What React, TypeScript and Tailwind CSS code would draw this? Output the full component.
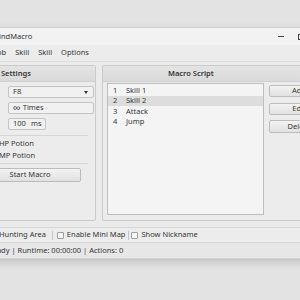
import React from 'react';

const font = { fontFamily: '"Noto Sans", "Open Sans", sans-serif' };

const macroSteps = ['Skill 1', 'Skill 2', 'Attack', 'Jump'];

const Field: React.FC<{ className?: string; children: React.ReactNode }> = ({ className = '', children }) => (
  <div
    className={`h-[12px] flex items-center px-[4px] border border-[#c4c4c4] rounded-[2px] bg-[#f1f1f1] ${className}`}
  >
    {children}
  </div>
);

const Radio: React.FC<{ label: string }> = ({ label }) => (
  <div className="h-[12px] flex items-center gap-[2px]">
    <span className="w-[8px] h-[8px] rounded-full border border-[#9a9a9a] bg-[#f6f6f6]" />
    <span>{label}</span>
  </div>
);

const Check: React.FC<{ label: string }> = ({ label }) => (
  <div className="flex items-center gap-[3px]">
    <span className="w-[7px] h-[7px] border border-[#a0a0a0] rounded-[1px] bg-[#f6f6f6]" />
    <span>{label}</span>
  </div>
);

const SideButton: React.FC<{ label: string; className?: string }> = ({ label, className = '' }) => (
  <div
    className={`w-[60px] flex items-center justify-center border border-[#bdbdbd] rounded-[2px] bg-gradient-to-b from-[#f3f3f3] to-[#e1e1e1] ${className}`}
  >
    {label}
  </div>
);

export default function App() {
  return (
    <div
      className="w-[300px] h-[300px] overflow-hidden bg-[#e3e3e3] pt-[27px] text-[7.5px] leading-none text-[#363636]"
      style={font}
    >
      <div className="ml-[-40px] w-[380px] bg-[#ebebeb] border border-[#d0d0d0] shadow-[0_3px_8px_rgba(0,0,0,0.16)]">
        {/* title bar */}
        <div className="h-[17px] flex items-center pl-[31px] bg-[#f2f2f2]">
          <span>WindMacro</span>
          <div className="ml-auto mr-[8px] flex">
            <div className="w-[20px] h-[17px] flex items-center justify-center">
              <span className="w-[6px] h-px bg-[#444]" />
            </div>
            <div className="w-[20px] h-[17px] flex items-center justify-center">
              <span className="w-[6px] h-[6px] border border-[#444]" />
            </div>
            <div className="w-[20px] h-[17px] flex items-center justify-center text-[9px]">×</div>
          </div>
        </div>

        {/* menu bar */}
        <div className="h-[17px] flex items-center gap-[9px] pl-[34px] bg-[#ececec] border-b border-[#dedede]">
          <span>Job</span>
          <span>Skill</span>
          <span>Skill</span>
          <span>Options</span>
        </div>

        {/* panels */}
        <div className="flex gap-[6px] pl-[14px] pr-[4px] pt-[3px] pb-[6px]">
          {/* settings */}
          <div className="w-[123px] border border-[#cbcbcb] rounded-[2px] bg-[#ececec]">
            <div className="h-[16px] flex items-center pl-[25px] bg-gradient-to-b from-[#e4e4e4] to-[#dadada] border-b border-[#cfcfcf] font-semibold">
              Settings
            </div>
            <div className="pl-[19px] pt-[4px] pb-[6px]">
              <Field className="ml-[13px] w-[86px] justify-between">
                <span>F8</span>
                <span className="w-0 h-0 border-l-[2.5px] border-r-[2.5px] border-t-[3px] border-l-transparent border-r-transparent border-t-[#333] mr-[1px]" />
              </Field>
              <Field className="ml-[13px] w-[86px] mt-[4px] gap-[2px]">
                <span className="text-[11px] leading-none mt-[-1px]">∞</span>
                <span>Times</span>
              </Field>
              <Field className="ml-[13px] w-[38px] mt-[4px] gap-[5px]">
                <span>100</span>
                <span>ms</span>
              </Field>
              <div className="h-px bg-[#d6d6d6] mt-[5px] mr-[7px] ml-[-18px]" />
              <div className="mt-[2px] ml-[-6px]">
                <Radio label="HP Potion" />
                <Radio label="MP Potion" />
              </div>
              <div className="h-px bg-[#d6d6d6] mt-[1px] mr-[7px] ml-[-18px]" />
              <div className="mt-[4px] ml-[-16px] w-[102px] h-[14px] flex items-center justify-center border border-[#bcbcbc] rounded-[2px] bg-gradient-to-b from-[#f4f4f4] to-[#e0e0e0]">
                Start Macro
              </div>
            </div>
          </div>

          {/* macro script */}
          <div className="w-[233px] border border-[#cbcbcb] rounded-[2px] bg-[#ececec]">
            <div className="h-[16px] flex items-center pl-[65px] bg-gradient-to-b from-[#e4e4e4] to-[#dadada] border-b border-[#cfcfcf] font-semibold">
              Macro Script
            </div>
            <div className="flex gap-[5px] pl-[4px] pr-[5px] pt-[1px] pb-[5px]">
              <div className="w-[158px] h-[132px] border border-[#bdbdbd] bg-[#f4f4f4] pt-[1px]">
                {macroSteps.map((step, i) => (
                  <div
                    key={step}
                    className={`h-[10.5px] flex items-center pl-[5px] ${i === 1 ? 'bg-[#dddddd]' : ''}`}
                  >
                    <span className="w-[13px]">{i + 1}</span>
                    <span>{step}</span>
                  </div>
                ))}
              </div>
              <div className="flex flex-col pt-[2px]">
                <SideButton label="Add" className="h-[12px]" />
                <SideButton label="Edit" className="h-[12px] mt-[6px]" />
                <SideButton label="Delete" className="h-[13px] mt-[5px]" />
              </div>
            </div>
          </div>
        </div>

        {/* options row */}
        <div className="h-[15px] flex items-center pl-[28px] border-t border-[#d6d6d6] bg-[#ececec]">
          <Check label="Hunting Area" />
          <span className="w-px h-[9px] bg-[#c6c6c6] ml-[6px] mr-[4px]" />
          <Check label="Enable Mini Map" />
          <span className="w-px h-[9px] bg-[#c6c6c6] ml-[3px] mr-[2px]" />
          <Check label="Show Nickname" />
        </div>

        {/* status bar */}
        <div className="h-[16px] flex items-center pl-[27px] border-t border-[#d6d6d6] bg-[#e7e7e7] whitespace-pre">
          Ready | Runtime: 00:00:00 | Actions: 0
        </div>
      </div>
    </div>
  );
}
